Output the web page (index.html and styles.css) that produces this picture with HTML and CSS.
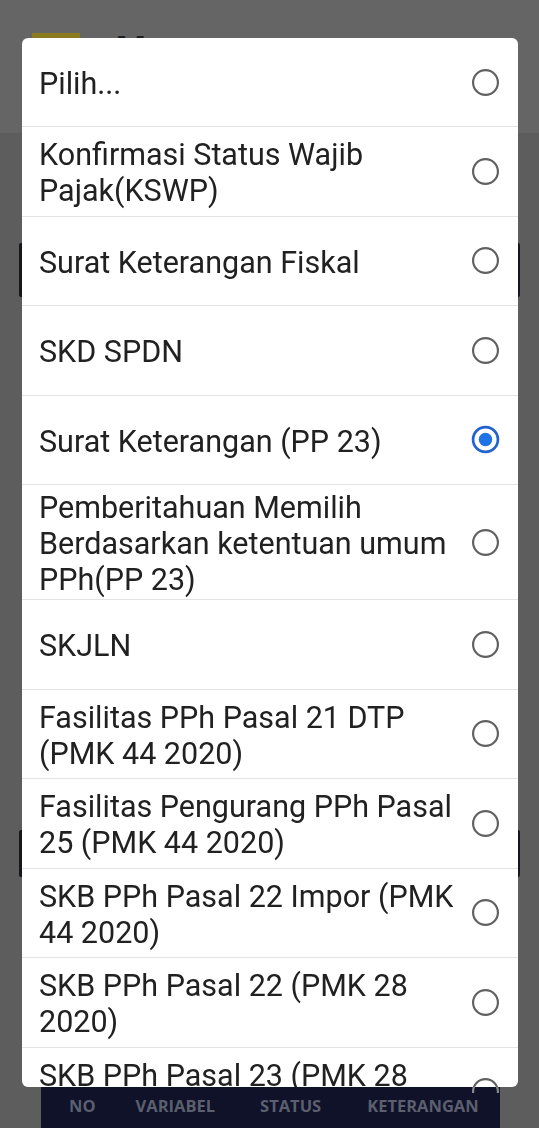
FILE: index.html
```html
<!DOCTYPE html>
<html lang="id">
<head>
<meta charset="utf-8">
<title>Pilih Layanan</title>
<link rel="stylesheet" href="styles.css">
</head>
<body>
<div class="app">
  <header class="app-bar">
    <div class="logo"></div>
    <div class="title">M</div>
  </header>
  <main class="content">
    <div class="card card-a"></div>
    <div class="card card-b"></div>
  </main>
  <div class="table-head">
    <span class="th th-no">NO</span>
    <span class="th th-var">VARIABEL</span>
    <span class="th th-status">STATUS</span>
    <span class="th th-ket">KETERANGAN</span>
  </div>
</div>

<div class="dialog">
  <div class="row"><span class="label">Pilih...</span><svg class="radio" viewBox="0 0 28 28"><circle cx="14" cy="14" r="12" class="ring"/></svg></div>
  <div class="row"><span class="label">Konfirmasi Status Wajib<br>Pajak(KSWP)</span><svg class="radio" viewBox="0 0 28 28"><circle cx="14" cy="14" r="12" class="ring"/></svg></div>
  <div class="row"><span class="label">Surat Keterangan Fiskal</span><svg class="radio" viewBox="0 0 28 28"><circle cx="14" cy="14" r="12" class="ring"/></svg></div>
  <div class="row"><span class="label">SKD SPDN</span><svg class="radio" viewBox="0 0 28 28"><circle cx="14" cy="14" r="12" class="ring"/></svg></div>
  <div class="row"><span class="label">Surat Keterangan (PP 23)</span><svg class="radio" viewBox="0 0 28 28"><circle cx="14" cy="14" r="12" class="ring-on"/><circle cx="14" cy="14" r="6.5" class="dot"/></svg></div>
  <div class="row"><span class="label">Pemberitahuan Memilih<br>Berdasarkan ketentuan umum<br>PPh(PP 23)</span><svg class="radio" viewBox="0 0 28 28"><circle cx="14" cy="14" r="12" class="ring"/></svg></div>
  <div class="row"><span class="label">SKJLN</span><svg class="radio" viewBox="0 0 28 28"><circle cx="14" cy="14" r="12" class="ring"/></svg></div>
  <div class="row"><span class="label">Fasilitas PPh Pasal 21 DTP<br>(PMK 44 2020)</span><svg class="radio" viewBox="0 0 28 28"><circle cx="14" cy="14" r="12" class="ring"/></svg></div>
  <div class="row"><span class="label">Fasilitas Pengurang PPh Pasal<br>25 (PMK 44 2020)</span><svg class="radio" viewBox="0 0 28 28"><circle cx="14" cy="14" r="12" class="ring"/></svg></div>
  <div class="row"><span class="label">SKB PPh Pasal 22 Impor (PMK<br>44 2020)</span><svg class="radio" viewBox="0 0 28 28"><circle cx="14" cy="14" r="12" class="ring"/></svg></div>
  <div class="row"><span class="label">SKB PPh Pasal 22 (PMK 28<br>2020)</span><svg class="radio" viewBox="0 0 28 28"><circle cx="14" cy="14" r="12" class="ring"/></svg></div>
  <div class="row"><span class="label">SKB PPh Pasal 23 (PMK 28<br>2020)</span><svg class="radio" viewBox="0 0 28 28"><circle cx="14" cy="14" r="12" class="ring"/></svg></div>
</div>
<div class="peek"><svg class="peek-radio" viewBox="0 0 28 28"><circle cx="14" cy="14" r="12" class="peek-ring"/></svg></div>
</body>
</html>
```
FILE: styles.css
```css
* { box-sizing: border-box; }
html, body { margin: 0; padding: 0; }
body {
  width: 539px;
  height: 1128px;
  overflow: hidden;
  background: #5d5d5d;
  font-family: Roboto, "Noto Sans", "Liberation Sans", sans-serif;
}
.app {
  height: 1128px;
  display: flex;
  flex-direction: column;
}
.app-bar {
  height: 133px;
  background: #656565;
  display: flex;
  align-items: flex-start;
  gap: 36px;
  padding: 33px 0 0 32px;
}
.logo {
  width: 48px;
  height: 40px;
  background: #8a7b1f;
}
.title {
  font-size: 34px;
  font-weight: 700;
  color: #1e1e1e;
  line-height: 1;
  margin-top: -2px;
}
.content {
  flex: 1;
  padding: 110px 19px 0 19px;
}
.card {
  background: #16161c;
  border-radius: 2px;
}
.card-a { height: 54px; }
.card-b { height: 47px; margin-top: 533px; }
.table-head {
  height: 46px;
  margin: 0 39px 0 41px;
  background: #0f1229;
  display: flex;
  align-items: flex-end;
  padding: 0 0 14px 0;
  font-family: "Open Sans", "Liberation Sans", sans-serif;
  font-weight: 700;
  font-size: 16.5px;
  color: #5b5f6e;
  line-height: 1;
}
.th-no { margin-left: 28px; }
.th-var { margin-left: 40px; }
.th-status { margin-left: 45px; }
.th-ket { margin-left: 46px; }

.dialog {
  position: fixed;
  top: 38px;
  left: 22px;
  width: 496px;
  height: 1049px;
  background: #ffffff;
  border-radius: 6px;
  overflow: hidden;
}
.row {
  min-height: 89.5px;
  display: flex;
  align-items: center;
  justify-content: space-between;
  gap: 12px;
  padding: 5px 18px 1px 17px;
  border-top: 1px solid #e3e3e3;
}
.row:first-child {
  border-top: none;
  min-height: 88px;
}
.label {
  font-size: 30.5px;
  line-height: 36px;
  color: #212121;
}
.radio {
  width: 29px;
  height: 29px;
  flex: none;
  margin-top: -4px;
}
.ring {
  fill: none;
  stroke: #616161;
  stroke-width: 2.1;
}
.ring-on {
  fill: none;
  stroke: #2162cf;
  stroke-width: 2.6;
}
.dot { fill: #1e73e6; }
.peek {
  position: fixed;
  left: 471px;
  top: 1087px;
  width: 29px;
  height: 6px;
  overflow: hidden;
}
.peek-radio {
  display: block;
  width: 29px;
  height: 29px;
  margin-top: -10px;
}
.peek-ring {
  fill: none;
  stroke: #8a8a8a;
  stroke-width: 2.1;
}
```
